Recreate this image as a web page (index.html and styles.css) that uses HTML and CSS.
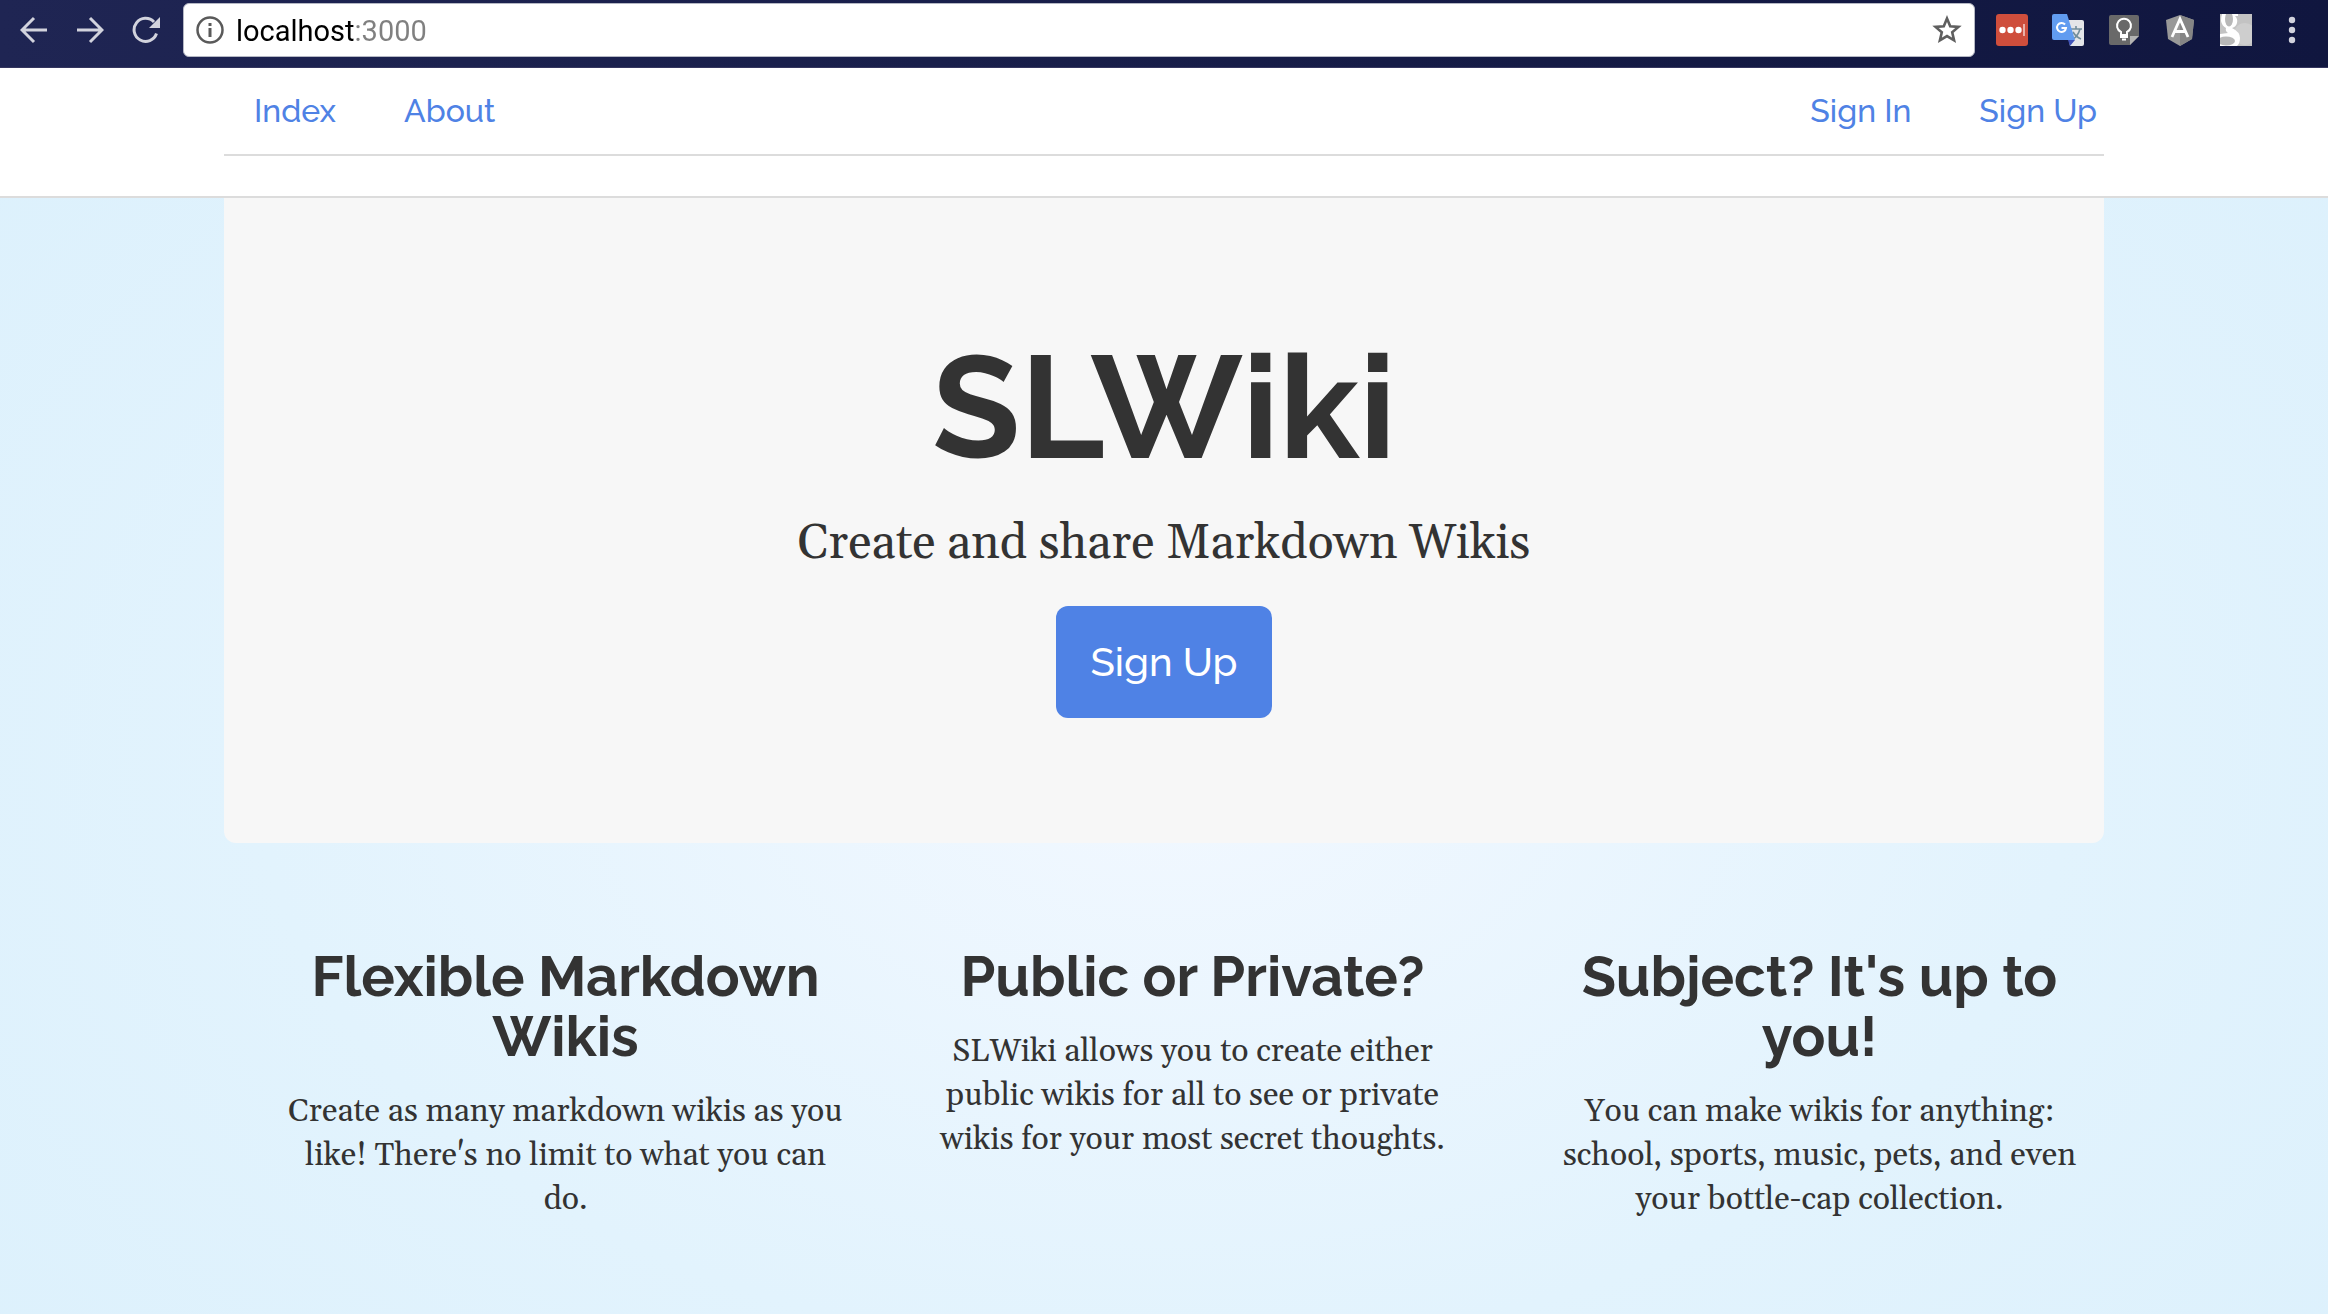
FILE: index.html
```html
<!DOCTYPE html>
<html lang="en">
<head>
<meta charset="utf-8">
<title>SLWiki</title>
<link rel="stylesheet" href="styles.css">
</head>
<body>
<div class="toolbar">
  <button class="tool" aria-label="Back"><svg width="28" height="28" viewBox="0 0 28 28"><path d="M27 14H3M14 2 2 14l12 12" fill="none" stroke="#d2d3dd" stroke-width="3"/></svg></button>
  <button class="tool" aria-label="Forward"><svg width="28" height="28" viewBox="0 0 28 28"><path d="M1 14h24M14 2l12 12-12 12" fill="none" stroke="#d2d3dd" stroke-width="3"/></svg></button>
  <button class="tool" aria-label="Reload"><svg width="28" height="28" viewBox="0 0 28 28"><path d="M22 6A11.500 11.500 0 1 0 24.500 17.500" fill="none" stroke="#d2d3dd" stroke-width="3"/><path d="M28 1v11H17z" fill="#d2d3dd"/></svg></button>
  <div class="address">
    <svg width="28" height="28" viewBox="0 0 28 28"><circle cx="14" cy="14" r="12.500" fill="none" stroke="#5a5a5a" stroke-width="2.500"/><path d="M12.500 7h3v3h-3zM12.500 12h3v9h-3z" fill="#5a5a5a"/></svg>
    <input class="url" type="text" value="localhost:3000" aria-label="Address">
    <button class="star" aria-label="Bookmark"><svg width="30" height="30" viewBox="0 0 30 30"><path d="m15 3.500 3.200 7.700 8.300.7-6.300 5.400 1.900 8.100-7.100-4.300-7.100 4.300 1.900-8.100-6.300-5.400 8.300-.7z" fill="none" stroke="#5f5f5f" stroke-width="2.600"/></svg></button>
  </div>
  <div class="extensions">
    <button class="tool" aria-label="Passwords"><svg width="32" height="32" viewBox="0 0 32 32"><rect width="32" height="32" rx="3" fill="#cf4e3c"/><g fill="#fff"><circle cx="6.500" cy="16" r="3.200"/><circle cx="14.500" cy="16" r="3.200"/><circle cx="22.500" cy="16" r="3.200"/></g><path d="M28 10v12" stroke="#f3c9c2" stroke-width="1.600"/></svg></button>
    <button class="tool" aria-label="Translate"><svg width="32" height="32" viewBox="0 0 32 32"><path d="M13 6h17a2 2 0 0 1 2 2v22a2 2 0 0 1-2 2H18z" fill="#e4e5e8"/><path d="M16 26h7l-5 6z" fill="#4053b8"/><path d="M19 15h11M24 12v3M28 15q-2 7-7 10M21 18q3 5 8 7" fill="none" stroke="#718d9b" stroke-width="1.600"/><path d="M2 0h13l8 26H2a2 2 0 0 1-2-2V2a2 2 0 0 1 2-2z" fill="#619cf0"/><path d="M13 10.500a4.500 4.500 0 1 0 1 3.500H9.500" fill="none" stroke="#fff" stroke-width="2"/></svg></button>
    <button class="tool" aria-label="Notes"><svg width="32" height="32" viewBox="0 0 32 32"><path d="M3 1h26a2 2 0 0 1 2 2v19l-9 9H3a2 2 0 0 1-2-2V3a2 2 0 0 1 2-2z" fill="#696969"/><path d="M31 22l-9 9v-9z" fill="#b3b3b3"/><path d="M13 19.500v-1.500a7 7 0 1 1 6 0v5h-6v-4zM13 21h6M14 25.500h4" fill="none" stroke="#fff" stroke-width="2"/></svg></button>
    <button class="tool" aria-label="Angular"><svg width="32" height="32" viewBox="0 0 32 32"><path d="M16 1 30 6l-2 19-12 7L4 25 2 6z" fill="#999"/><path d="M16 1 30 6l-2 19-12 7z" fill="#858585"/><path d="m8 23 8-18 8 18M11 17.500h10" fill="none" stroke="#fff" stroke-width="2.800"/></svg></button>
    <button class="tool" aria-label="Search"><svg width="32" height="32" viewBox="0 0 32 32"><path d="M0 0h32v32H0z" fill="#c3c3c3"/><circle cx="25" cy="20" r="11" fill="#cecece"/><path d="M2 0h16v2h-3q3 3 2 7-1 4-5 5 8 4 8 10 0 5-3 8H0V20l8-1q-3-2-2-5-4-2-5-7 0-4 1-7z" fill="#fff"/><ellipse cx="9" cy="5" rx="4" ry="7.500" fill="#b8b8b8"/><ellipse cx="6" cy="27" rx="9" ry="4.500" fill="#b8b8b8"/></svg></button>
    <button class="tool" aria-label="Menu"><svg width="32" height="32" viewBox="0 0 32 32"><g fill="#d2d3dd"><circle cx="16" cy="6" r="3.200"/><circle cx="16" cy="16" r="3.200"/><circle cx="16" cy="26" r="3.200"/></g></svg></button>
  </div>
</div>

<header class="site-header">
  <nav class="container nav">
    <div class="nav-group"><a href="#">Index</a><a href="#">About</a></div>
    <div class="nav-group"><a href="#">Sign In</a><a href="#">Sign Up</a></div>
  </nav>
</header>

<main class="container">
  <section class="hero">
    <h1>SLWiki</h1>
    <p>Create and share Markdown Wikis</p>
    <a class="cta" href="#">Sign Up</a>
  </section>
  <section class="features">
    <article>
      <h2>Flexible Markdown Wikis</h2>
      <p>Create as many markdown wikis as you like! There's no limit to what you can do.</p>
    </article>
    <article>
      <h2>Public or Private?</h2>
      <p>SLWiki allows you to create either public wikis for all to see or private wikis for your most secret thoughts.</p>
    </article>
    <article>
      <h2>Subject? It's up to you!</h2>
      <p>You can make wikis for anything: school, sports, music, pets, and even your bottle-cap collection.</p>
    </article>
  </section>
</main>
</body>
</html>
```
FILE: styles.css
```css
* { box-sizing: border-box; }

html { height: 100%; }

body {
  margin: 0;
  min-height: 100%;
  color: #333;
  font-family: Gelasio, Georgia, "Liberation Serif", serif;
  font-size: 32px;
  line-height: 44px;
  background: radial-gradient(ellipse at 50% 58%, #f2f8ff 0%, #e2f3fd 55%, #dbf0fc 100%);
}

h1, h2, p { margin: 0; }

a { color: #4f82e5; text-decoration: none; }

button {
  padding: 0;
  border: 0;
  background: none;
}

svg { display: block; }

.toolbar {
  display: flex;
  align-items: flex-start;
  height: 68px;
  padding: 3px 20px 0;
  background: linear-gradient(90deg, #1f2553, #10163f);
  border-bottom: 1px solid #35365f;
}

.tool {
  display: flex;
  align-items: center;
  height: 54px;
  margin-right: 28px;
}

.address {
  display: flex;
  flex: 1;
  align-items: center;
  gap: 12px;
  height: 54px;
  margin-left: -5px;
  padding: 0 12px;
  background: #fff;
  border: 1px solid #b5b8c4;
  border-radius: 6px;
}

.url {
  flex: 1;
  min-width: 0;
  padding: 1px 0 0;
  border: 0;
  color: transparent;
  font: 29px/36px Roboto, sans-serif;
  background: linear-gradient(90deg, #000 119px, #808080 119px);
  -webkit-background-clip: text;
  background-clip: text;
}

.extensions {
  display: flex;
  gap: 24px;
  margin-left: 21px;
}

.extensions .tool { margin: 0; }

.container {
  width: calc(100% - 48px);
  max-width: 1880px;
  margin: 0 auto;
}

.site-header {
  height: 130px;
  background: #fff;
  border-bottom: 2px solid #dcdcdc;
}

.nav {
  display: flex;
  justify-content: space-between;
  height: 88px;
  padding: 20px 7px 0 30px;
  border-bottom: 2px solid #dcdcdc;
  font: 500 32px/46px Raleway, Lato, sans-serif;
}

.nav-group { display: flex; gap: 68px; }

.hero {
  display: flex;
  flex-direction: column;
  align-items: center;
  padding: 130px 24px 125px;
  background: #f7f7f7;
  border-radius: 0 0 12px 12px;
  text-align: center;
}

h1 {
  font: bold 144px/160px Raleway, Lato, sans-serif;
}

.hero p {
  margin-top: 24px;
  font-size: 48px;
  line-height: 64px;
}

.cta {
  margin-top: 30px;
  padding: 32px 34px;
  border-radius: 12px;
  color: #fff;
  background: #4f82e5;
  font: 500 40px/48px Raleway, Lato, sans-serif;
}

.features {
  display: grid;
  grid-template-columns: repeat(3, 1fr);
  gap: 60px;
  padding: 103px 1px 80px 58px;
  text-align: center;
}

h2 {
  margin-bottom: 24px;
  font: bold 56px/60px Raleway, Lato, sans-serif;
}
```
